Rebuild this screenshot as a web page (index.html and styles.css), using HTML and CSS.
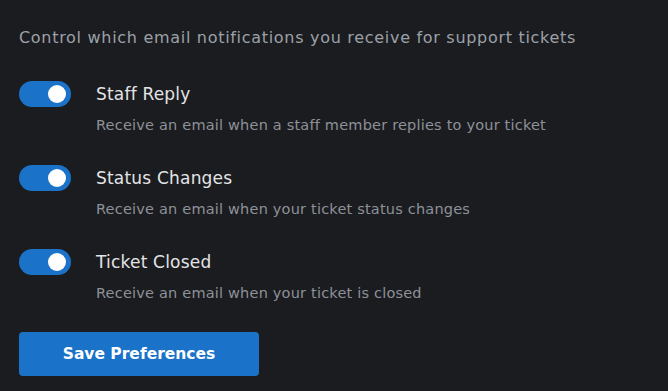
FILE: index.html
```html
<!DOCTYPE html>
<html lang="en">
<head>
<meta charset="utf-8">
<title>Email Notifications</title>
<link rel="stylesheet" href="styles.css">
</head>
<body>
<div class="panel">
  <p class="intro">Control which email notifications you receive for support tickets</p>
  <div class="prefs">
    <div class="pref">
      <label class="toggle"><input type="checkbox" checked><span class="track"><span class="knob"></span></span></label>
      <div class="text">
        <div class="label">Staff Reply</div>
        <div class="desc">Receive an email when a staff member replies to your ticket</div>
      </div>
    </div>
    <div class="pref">
      <label class="toggle"><input type="checkbox" checked><span class="track"><span class="knob"></span></span></label>
      <div class="text">
        <div class="label">Status Changes</div>
        <div class="desc">Receive an email when your ticket status changes</div>
      </div>
    </div>
    <div class="pref">
      <label class="toggle"><input type="checkbox" checked><span class="track"><span class="knob"></span></span></label>
      <div class="text">
        <div class="label">Ticket Closed</div>
        <div class="desc">Receive an email when your ticket is closed</div>
      </div>
    </div>
  </div>
  <button class="save" type="button">Save Preferences</button>
</div>
</body>
</html>
```
FILE: styles.css
```css
html, body {
  margin: 0;
  padding: 0;
  background: #1b1c20;
}
body {
  font-family: "DejaVu Sans", "Open Sans", sans-serif;
  width: 668px;
  height: 391px;
  overflow: hidden;
}
.panel {
  padding: 28px 19px 0 19px;
  display: flex;
  flex-direction: column;
  align-items: flex-start;
}
.intro {
  margin: 0;
  font-size: 16px;
  letter-spacing: 0.7px;
  line-height: 20px;
  color: #9ba1a8;
  white-space: nowrap;
}
.prefs {
  display: flex;
  flex-direction: column;
  gap: 28px;
  margin-top: 33px;
}
.pref {
  display: flex;
  align-items: flex-start;
  gap: 25px;
}
.toggle {
  display: block;
  flex: none;
}
.toggle input {
  display: none;
}
.track {
  display: flex;
  align-items: center;
  justify-content: flex-end;
  width: 52px;
  height: 26px;
  border-radius: 13px;
  background: #1a73c8;
  padding: 0 5px;
  box-sizing: border-box;
}
.knob {
  width: 18px;
  height: 18px;
  border-radius: 50%;
  background: #ffffff;
}
.text {
  display: flex;
  flex-direction: column;
  gap: 6px;
}
.label {
  font-size: 17px;
  letter-spacing: 0.2px;
  line-height: 26px;
  color: #e3e4e6;
}
.desc {
  font-size: 14.5px;
  letter-spacing: 0.2px;
  line-height: 24px;
  color: #8d9198;
  white-space: nowrap;
}
.save {
  margin-top: 27px;
  width: 240px;
  height: 44px;
  border: none;
  border-radius: 4px;
  background: #1a73c8;
  color: #ffffff;
  font-family: inherit;
  font-size: 15.5px;
  font-weight: bold;
  cursor: pointer;
}
```
